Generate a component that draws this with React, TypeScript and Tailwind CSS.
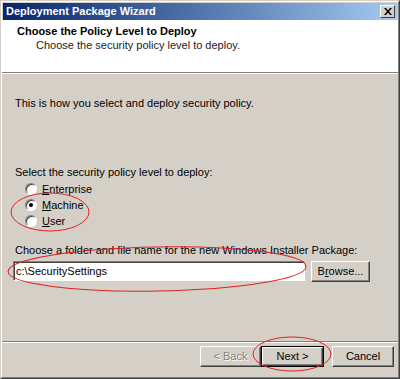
const btn =
  'h-[21px] bg-[#d4d0c8] border border-t-white border-l-white border-r-[#404040] border-b-[#404040] shadow-[inset_-1px_-1px_#808080] text-[11px] flex items-center justify-center';

const Radio = ({ label, checked }: { label: React.ReactNode; checked?: boolean }) => (
  <div className="flex items-center gap-[5px] h-[16px]">
    <span className="w-[12px] h-[12px] rounded-full bg-white border border-t-[#808080] border-l-[#808080] border-r-white border-b-white shadow-[inset_1px_1px_#404040] flex items-center justify-center">
      {checked && <span className="w-[4px] h-[4px] rounded-full bg-black" />}
    </span>
    <span>{label}</span>
  </div>
);

export default function App() {
  return (
    <div
      className="relative w-[400px] h-[379px] bg-[#d4d0c8] border border-l-[#d4d0c8] border-t-[#d4d0c8] border-r-[#404040] border-b-[#404040] text-[11px] text-black overflow-hidden"
      style={{ fontFamily: '"Liberation Sans", Arial, sans-serif' }}
    >
      <div className="flex flex-col h-full border border-l-white border-t-white border-r-[#808080] border-b-[#808080] p-px">
        {/* title bar */}
        <div className="h-[17px] shrink-0 flex items-center justify-between pl-[3px] pr-[2px] bg-gradient-to-r from-[#0a246a] to-[#a6caf0]">
          <span className="text-white font-bold text-[11px] leading-none">Deployment Package Wizard</span>
          <span className="w-[15px] h-[13px] bg-[#d4d0c8] border border-t-white border-l-white border-r-[#404040] border-b-[#404040] flex items-center justify-center">
            <svg width="8" height="7" viewBox="0 0 8 7">
              <path d="M0 0h2l2 2.5L6 0h2L5 3.5 8 7H6L4 4.5 2 7H0l3-3.5z" fill="#000" />
            </svg>
          </span>
        </div>

        {/* header */}
        <div className="h-[53px] shrink-0 bg-white -mx-px border-b border-b-[#808080] flex flex-col pt-[4px]">
          <div className="pl-[15px] font-bold leading-[14px]">Choose the Policy Level to Deploy</div>
          <div className="pl-[34px] leading-[14px] text-[#222]">Choose the security policy level to deploy.</div>
        </div>
        <div className="h-px bg-white -mx-px shrink-0" />

        {/* body */}
        <div className="flex-1 flex flex-col px-[10px]">
          <div className="pl-[2px] mt-[21px]">This is how you select and deploy security policy.</div>
          <div className="pl-[2px] mt-[52px]">Select the security policy level to deploy:</div>
          <div className="flex flex-col pl-[12px] mt-px">
            <Radio label={<><u>E</u>nterprise</>} />
            <Radio label={<><u>M</u>achine</>} checked />
            <Radio label={<><u>U</u>ser</>} />
          </div>
          <div className="pl-[2px] mt-[13px]">
            Choose a folder and file name for the new Windows Installer Package:
          </div>
          <div className="flex items-center gap-[6px] mt-[2px]">
            <div className="w-[292px] h-[20px] bg-white border border-t-[#808080] border-l-[#808080] border-r-white border-b-white shadow-[inset_1px_1px_#404040] flex items-center pl-[2px]">
              c:\SecuritySettings
            </div>
            <button className={btn + ' w-[59px] h-[20px] text-black'}>
              B<u>r</u>owse...
            </button>
          </div>
        </div>

        {/* footer */}
        <div className="h-px bg-[#808080] -mx-px shrink-0" />
        <div className="h-px bg-white -mx-px shrink-0" />
        <div className="h-[33px] shrink-0 flex items-start justify-end gap-[8px] pt-[3px] pr-[3px]">
          <div className="flex">
            <button className={btn + ' w-[61px] text-[#808080] [text-shadow:1px_1px_#fff]'}>&lt; Back</button>
            <button className="w-[63px] h-[21px] border border-black bg-[#d4d0c8] flex text-black">
              <span className="flex-1 border border-t-white border-l-white border-r-[#404040] border-b-[#404040] shadow-[inset_-1px_-1px_#808080] flex items-center justify-center">
                Next &gt;
              </span>
            </button>
          </div>
          <button className={btn + ' w-[62px] text-black'}>Cancel</button>
        </div>
      </div>

      {/* red annotation marks */}
      <svg className="absolute inset-0 pointer-events-none" width="400" height="379">
        <ellipse cx="49" cy="211" rx="39" ry="19" fill="none" stroke="#e02020" strokeWidth="1" />
        <ellipse cx="156" cy="268" rx="149" ry="22" fill="none" stroke="#e02020" strokeWidth="1" transform="rotate(-1 156 268)" />
        <ellipse cx="291" cy="353" rx="39" ry="17" fill="none" stroke="#e02020" strokeWidth="1" />
      </svg>
    </div>
  );
}
